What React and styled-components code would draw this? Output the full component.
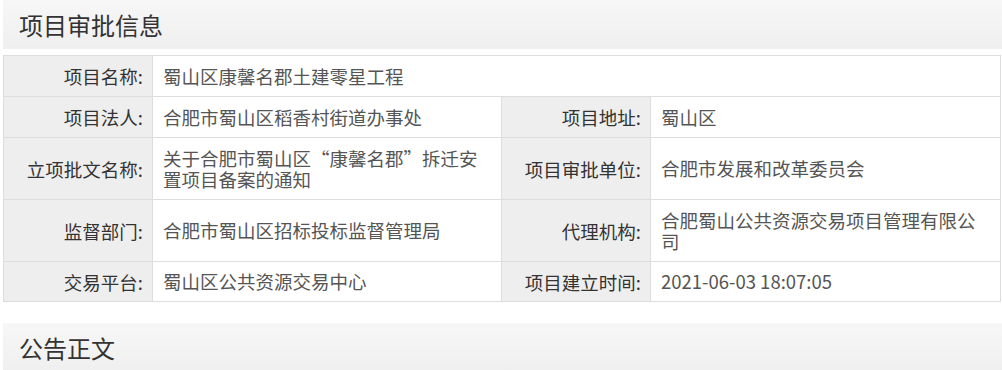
import React from "react";
import styled, { createGlobalStyle } from "styled-components";

const GlobalStyle = createGlobalStyle`
  body {
    margin: 0;
    background: #fff;
    font-family: "Noto Sans CJK SC", "Microsoft YaHei", sans-serif;
  }
`;

const rows = [
  { cells: [["项目名称:", "蜀山区康馨名郡土建零星工程"]] },
  {
    cells: [
      ["项目法人:", "合肥市蜀山区稻香村街道办事处"],
      ["项目地址:", "蜀山区"],
    ],
  },
  {
    cells: [
      ["立项批文名称:", "关于合肥市蜀山区“康馨名郡”拆迁安置项目备案的通知"],
      ["项目审批单位:", "合肥市发展和改革委员会"],
    ],
    tall: true,
  },
  {
    cells: [
      ["监督部门:", "合肥市蜀山区招标投标监督管理局"],
      ["代理机构:", "合肥蜀山公共资源交易项目管理有限公司"],
    ],
    tall: true,
  },
  {
    cells: [
      ["交易平台:", "蜀山区公共资源交易中心"],
      ["项目建立时间:", "2021-06-03 18:07:05"],
    ],
    last: true,
  },
];

export default function App() {
  return (
    <>
      <GlobalStyle />
      <Page>
        <SectionHead>
          <SectionTitle>项目审批信息</SectionTitle>
        </SectionHead>
        <InfoTable>
          <colgroup>
            <col style={{ width: "149px" }} />
            <col style={{ width: "349px" }} />
            <col style={{ width: "149px" }} />
            <col />
          </colgroup>
          <tbody>
            {rows.map((row, i) => (
              <Row key={i} $tall={row.tall} $last={row.last}>
                {row.cells.map(([label, value]) => (
                  <React.Fragment key={label}>
                    <Label>{label}</Label>
                    <Value colSpan={row.cells.length === 1 ? 3 : 1}>{value}</Value>
                  </React.Fragment>
                ))}
              </Row>
            ))}
          </tbody>
        </InfoTable>
        <SectionHead $second>
          <SectionTitle>公告正文</SectionTitle>
        </SectionHead>
      </Page>
    </>
  );
}

const Page = styled.div`
  padding-left: 3px;
  display: flex;
  flex-direction: column;
`;

const SectionHead = styled.div`
  height: 49px;
  display: flex;
  align-items: center;
  padding-left: 16px;
  background: linear-gradient(to bottom, #f7f7f7, #efefef);
  margin-top: ${(props) => (props.$second ? "21px" : "0")};
`;

const SectionTitle = styled.h2`
  margin: 0;
  font-size: 24px;
  font-weight: normal;
  color: #333;
`;

const InfoTable = styled.table`
  margin-top: 6px;
  width: 998px;
  border-collapse: collapse;
  table-layout: fixed;
  border: 1px solid #ddd;
  font-size: 18.5px;
`;

const Row = styled.tr`
  height: ${(props) => (props.$tall ? "62px" : props.$last ? "40px" : "41px")};
`;

const Label = styled.td`
  background: #eee;
  border: 1px solid #ddd;
  text-align: right;
  padding: 0 9px 0 6px;
  color: #333;
  white-space: nowrap;
`;

const Value = styled.td`
  border: 1px solid #ddd;
  padding: 0 10px;
  color: #555;
  line-height: 21px;
  word-break: break-all;
`;
